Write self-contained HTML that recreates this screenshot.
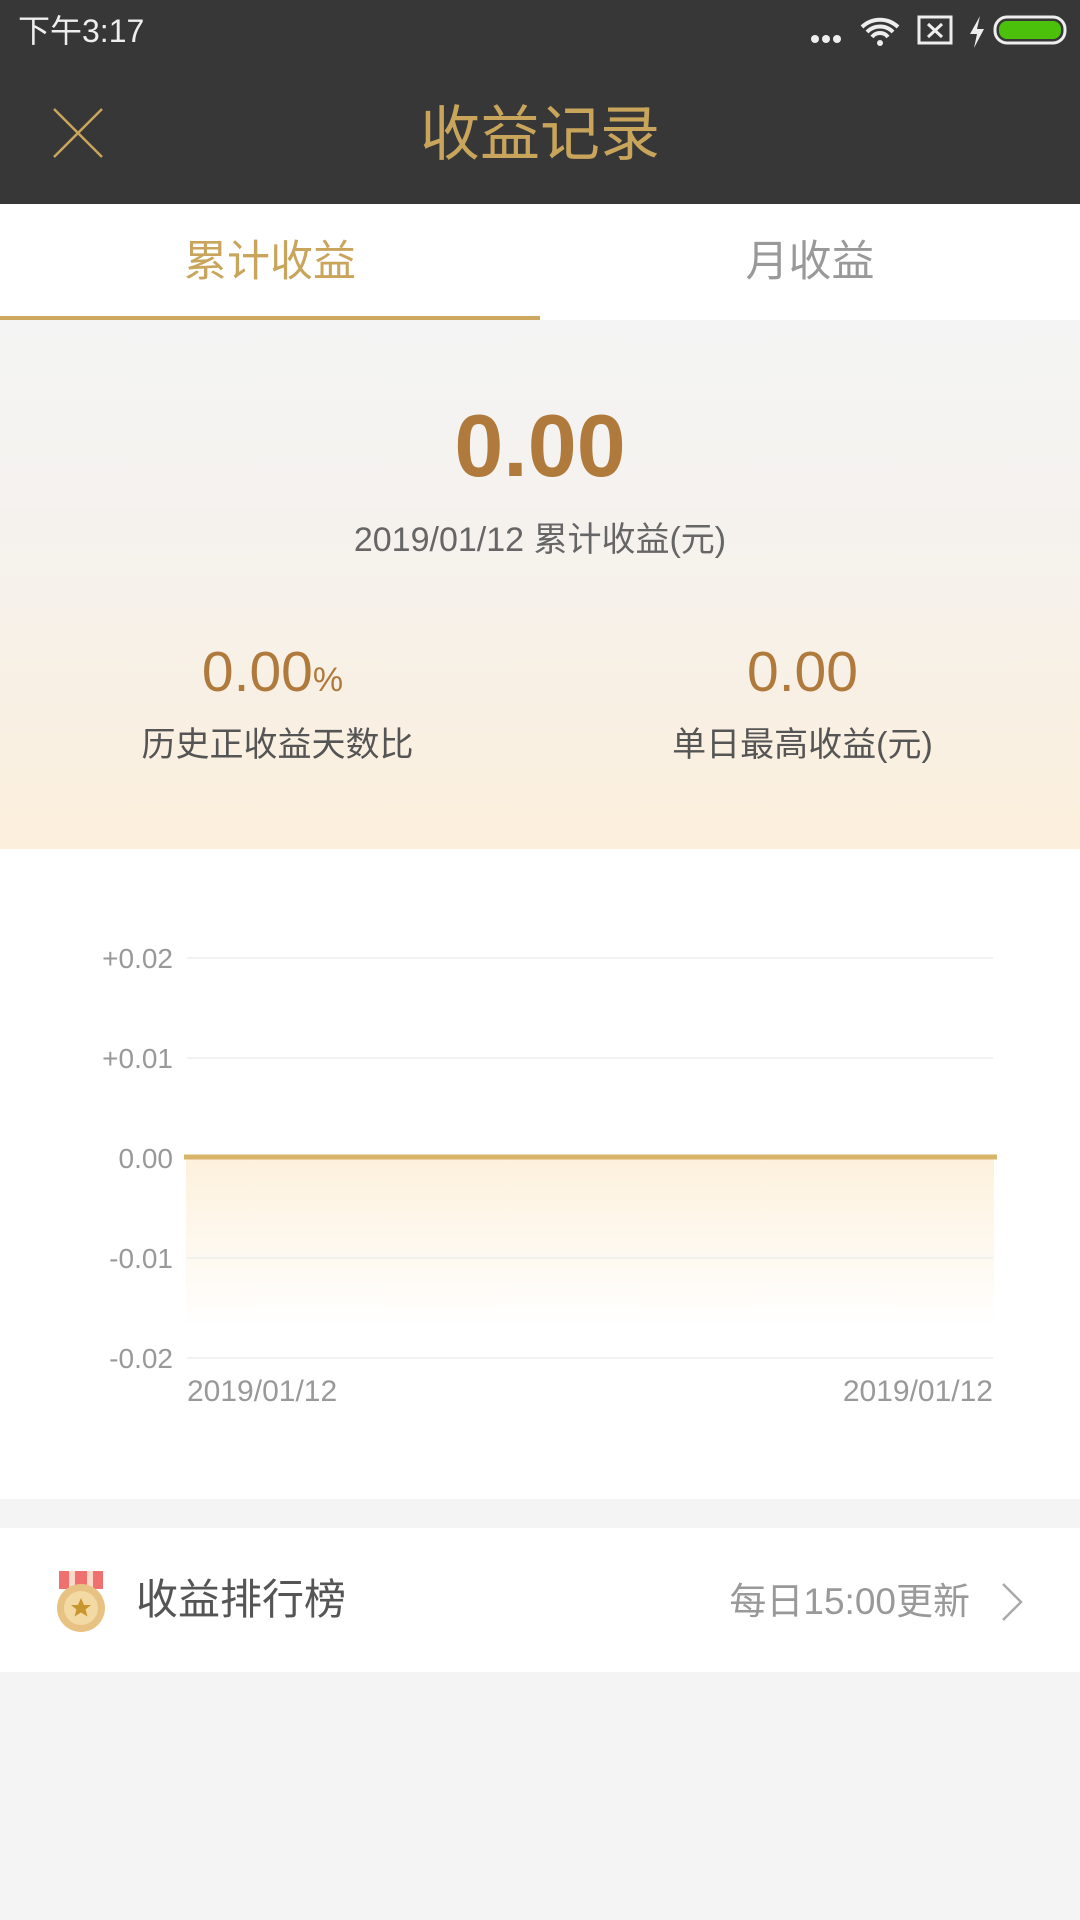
<!DOCTYPE html>
<html><head><meta charset="utf-8">
<style>
*{margin:0;padding:0;box-sizing:border-box}
body{width:1080px;height:1920px;background:#f4f4f4;font-family:"Liberation Sans","Noto Sans CJK SC",sans-serif;position:relative;overflow:hidden}
.abs{position:absolute}
.c{text-align:center}
</style></head><body>
<div class="abs" style="left:0;top:0;width:1080px;height:204px;background:#373737"></div>
<div class="abs" style="left:18px;top:9px;font-size:32px;color:#eee;line-height:44px">下午3:17</div>
<svg class="abs" style="left:805px;top:14px" width="262" height="36" viewBox="0 0 262 36">
<circle cx="10" cy="25" r="4" fill="#eee"/><circle cx="21" cy="25" r="4" fill="#eee"/><circle cx="32" cy="25" r="4" fill="#eee"/>
<path d="M57 13a26 26 0 0 1 36 0M62 18a18 18 0 0 1 26 0M67 23a10 10 0 0 1 16 0" stroke="#eee" stroke-width="4" fill="none"/>
<circle cx="75" cy="29" r="3" fill="#eee"/>
<rect x="114" y="3" width="32" height="26" fill="none" stroke="#eee" stroke-width="3"/>
<path d="M123 10l14 13M137 10l-14 13" stroke="#eee" stroke-width="3"/>
<path d="M175 2l-10 18h7l-3 14 10-19h-7z" fill="#eee"/>
<rect x="190" y="3" width="70" height="26" rx="12" fill="none" stroke="#eee" stroke-width="3"/>
<rect x="194" y="7" width="62" height="18" rx="8" fill="#4cc10b"/>
</svg>
<svg class="abs" style="left:52px;top:107px" width="52" height="52"><path d="M2 2L50 50M50 2L2 50" stroke="#c9a55c" stroke-width="2.5"/></svg>
<div class="abs c" style="left:0;top:97px;width:1080px;font-size:60px;color:#c9a55c;line-height:76px">收益记录</div>

<div class="abs" style="left:0;top:204px;width:1080px;height:116px;background:#fff"></div>
<div class="abs c" style="left:0;top:237px;width:540px;font-size:43px;color:#c9a55c;line-height:50px">累计收益</div>
<div class="abs c" style="left:540px;top:237px;width:540px;font-size:43px;color:#999;line-height:50px">月收益</div>
<div class="abs" style="left:0;top:316px;width:540px;height:4px;background:#cfa860"></div>

<div class="abs" style="left:0;top:320px;width:1080px;height:529px;background:linear-gradient(#f4f4f4 0%,#f5f2ee 40%,#fcefdc 100%)"></div>
<div class="abs c" style="left:0;top:391px;width:1080px;font-size:88px;font-weight:bold;color:#b07a3d;line-height:110px">0.00</div>
<div class="abs c" style="left:0;top:519px;width:1080px;font-size:34px;color:#666;line-height:42px">2019/01/12 累计收益(元)</div>
<div class="abs c" style="left:0;top:639px;width:545px;font-size:57px;color:#b07a3d;line-height:66px">0.00<span style="font-size:34px">%</span></div>
<div class="abs c" style="left:0;top:724px;width:555px;font-size:34px;color:#555;line-height:42px">历史正收益天数比</div>
<div class="abs c" style="left:540px;top:639px;width:525px;font-size:57px;color:#b07a3d;line-height:66px">0.00</div>
<div class="abs c" style="left:540px;top:724px;width:525px;font-size:34px;color:#555;line-height:42px">单日最高收益(元)</div>

<div class="abs" style="left:0;top:849px;width:1080px;height:650px;background:#fff"></div>
<svg class="abs" style="left:0;top:849px" width="1080" height="650">
<defs><linearGradient id="g" x1="0" y1="0" x2="0" y2="1"><stop offset="0" stop-color="#fdf1dc"/><stop offset="1" stop-color="#fff"/></linearGradient></defs>
<rect x="186" y="308" width="808" height="170" fill="url(#g)"/>
<g stroke="#eeeeee" stroke-width="1.5">
<line x1="187" y1="109" x2="993" y2="109"/><line x1="187" y1="209" x2="993" y2="209"/>
<line x1="187" y1="409" x2="993" y2="409"/><line x1="187" y1="509" x2="993" y2="509"/></g>
<line x1="184" y1="308" x2="997" y2="308" stroke="#d8b46a" stroke-width="5"/>
<g font-size="28" fill="#999" text-anchor="end" font-family="Liberation Sans">
<text x="173" y="119">+0.02</text><text x="173" y="219">+0.01</text><text x="173" y="319">0.00</text>
<text x="173" y="419">-0.01</text><text x="173" y="519">-0.02</text></g>
<g font-size="30" fill="#999" font-family="Liberation Sans">
<text x="187" y="552">2019/01/12</text><text x="993" y="552" text-anchor="end">2019/01/12</text></g>
</svg>

<div class="abs" style="left:0;top:1528px;width:1080px;height:144px;background:#fff"></div>
<svg class="abs" style="left:56px;top:1571px" width="50" height="62" viewBox="0 0 50 62">
<rect x="3" y="0" width="44" height="18" fill="#f07070"/>
<rect x="13" y="0" width="6" height="16" fill="#fbd9c9"/><rect x="31" y="0" width="6" height="16" fill="#fbd9c9"/>
<ellipse cx="25" cy="37" rx="24" ry="24" fill="#e8c283"/>
<ellipse cx="25" cy="37" rx="17" ry="17" fill="#f3d9a4"/>
<path d="M25 27l3 7h7l-5.5 4.5 2 7-6.5-4-6.5 4 2-7L15 34h7z" fill="#c9952e"/>
</svg>
<div class="abs" style="left:136px;top:1575px;font-size:42px;color:#555;line-height:50px">收益排行榜</div>
<div class="abs" style="right:110px;top:1580px;font-size:37px;color:#999;line-height:44px">每日15:00更新</div>
<svg class="abs" style="left:1000px;top:1582px" width="26" height="40"><path d="M3 2l18 18-18 18" stroke="#aaa" stroke-width="2.5" fill="none"/></svg>
</body></html>
